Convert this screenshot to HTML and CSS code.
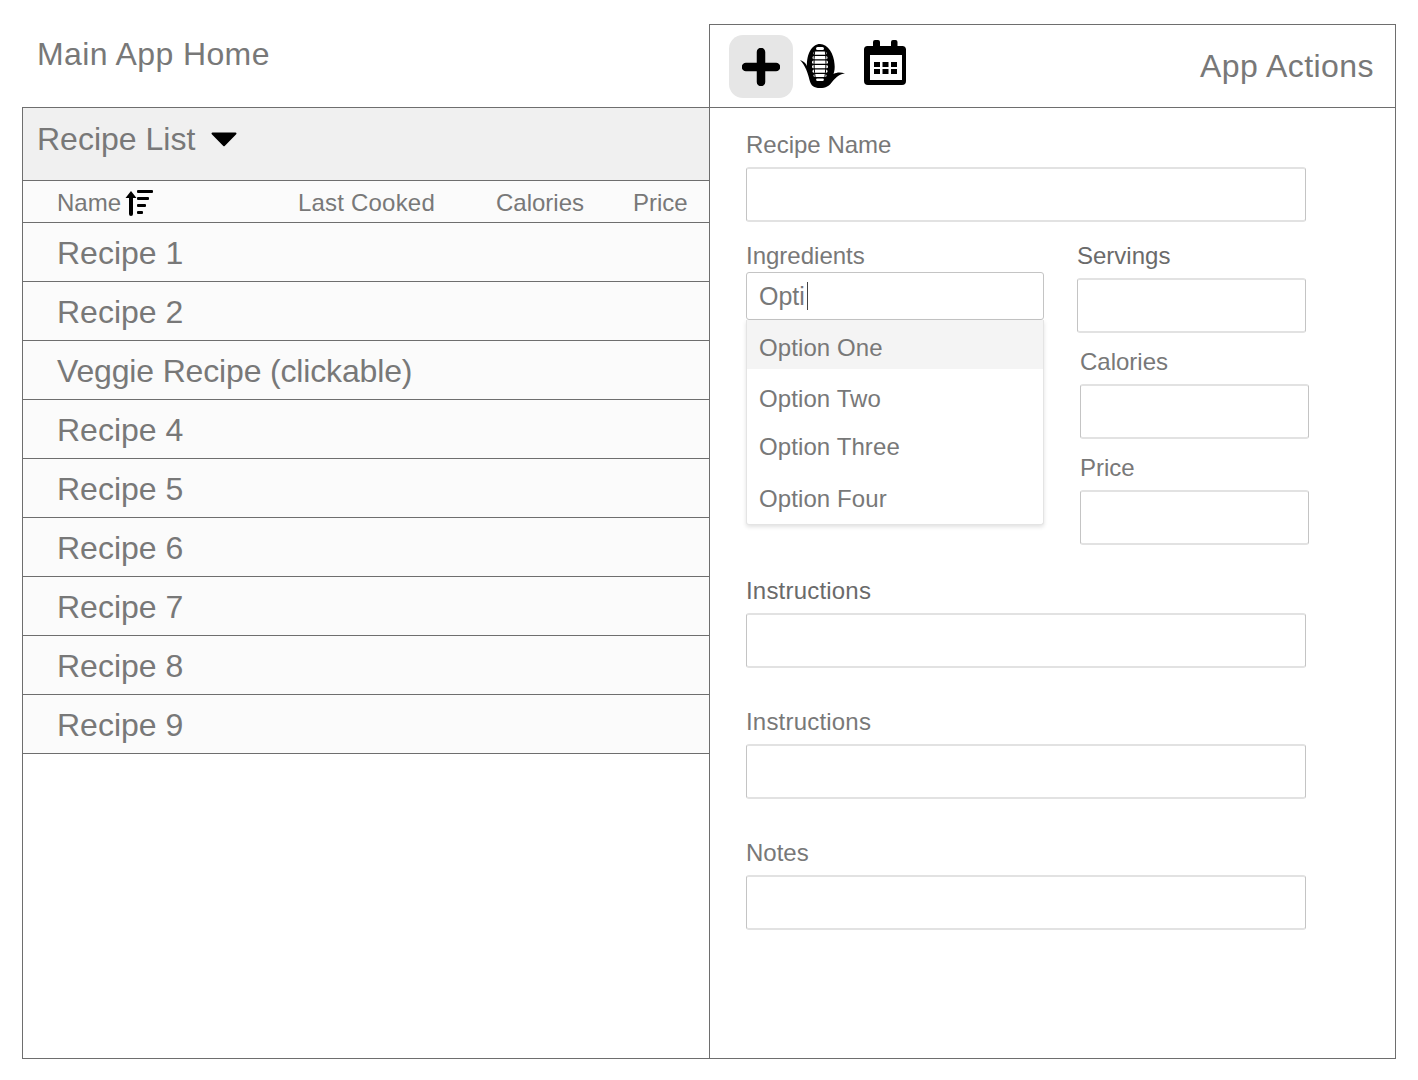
FILE: index.html
```html
<!DOCTYPE html>
<html lang="en">
<head>
    <meta charset="UTF-8">
    <meta name="viewport" content="width=device-width, initial-scale=1.0">
    <title>Recipes</title>
    <link rel="stylesheet" href="styles.css">
</head>
<body>
    <div id="main">
        <section class="home">
            <h1 class="home-title">Main App Home</h1>
            <div class="list-panel">
                <div class="list-head">
                    <h2>Recipe List</h2>
                    <svg class="caret" width="26" height="15" viewBox="0 0 26 15"><path d="M1.5 0.5h23a1 1 0 0 1 .7 1.7L13.7 14a1 1 0 0 1-1.4 0L.8 2.2A1 1 0 0 1 1.5 .5z"/></svg>
                </div>
                <div class="columns">
                    <div class="col col-name">Name
                        <svg class="sort" width="28" height="28" viewBox="0 0 28 28">
                            <path d="M6 2L11.500 9H8V25a2 2 0 0 1-4 0V9H.5z"/>
                            <rect x="12" y="1" width="16" height="3" rx="1"/>
                            <rect x="12" y="8" width="12" height="3" rx="1"/>
                            <rect x="12" y="15" width="9" height="3" rx="1"/>
                            <rect x="12" y="22" width="6" height="3" rx="1"/>
                        </svg>
                    </div>
                    <div class="col col-cooked">Last Cooked</div>
                    <div class="col col-cal">Calories</div>
                    <div class="col col-price">Price</div>
                </div>
                <ul class="recipes">
                    <li>Recipe 1</li>
                    <li>Recipe 2</li>
                    <li class="veggie">Veggie Recipe (clickable)</li>
                    <li>Recipe 4</li>
                    <li>Recipe 5</li>
                    <li>Recipe 6</li>
                    <li>Recipe 7</li>
                    <li>Recipe 8</li>
                    <li>Recipe 9</li>
                </ul>
            </div>
        </section>

        <section class="actions">
            <div class="toolbar">
                <button class="tool tool-add">
                    <svg width="38" height="38" viewBox="0 0 38 38"><path d="M19 4v30M4 19h30" stroke="#000" stroke-width="8.5" stroke-linecap="round" fill="none"/></svg>
                </button>
                <svg class="corn" width="46" height="46" viewBox="0 0 46 46">
                    <path d="M20 0C28 0 34 10 34.500 20C35 24 34.500 27 33.500 30C37 28 41 28 45 29.500C40 30 36 33 32 38C29 42 26 44 20 44C14 44 11 42 9.500 36C8 29 5 21 0 16C3 17 6 19 7 22C6.500 10 12 0 20 0z"/>
                    <g fill="#fff">
                        <rect x="16" y="3" width="8" height="3" rx="1.500"/>
                        <rect x="13.500" y="7.500" width="13" height="3.200" rx="1.500"/>
                        <rect x="12.500" y="12" width="15" height="3.200" rx="1.500"/>
                        <rect x="12" y="16.500" width="16" height="3.200" rx="1.500"/>
                        <rect x="12" y="21" width="16" height="3.200" rx="1.500"/>
                        <rect x="12.500" y="25.500" width="15" height="3.200" rx="1.500"/>
                        <rect x="13.500" y="30" width="13" height="3" rx="1.500"/>
                        <rect x="16" y="34.500" width="8" height="2.500" rx="1.200"/>
                    </g>
                    <g fill="none" stroke="#000" stroke-width="1">
                        <path d="M15.500 2C13.500 12 13.500 26 16 38"/>
                        <path d="M24.500 2C26.500 12 26.500 26 24 38"/>
                    </g>
                </svg>
                <svg class="calendar" width="44" height="46" viewBox="0 0 44 46">
                    <path d="M10 2a2 2 0 0 1 2-2h3a2 2 0 0 1 2 2V6h11V2a2 2 0 0 1 2-2h2.500a2 2 0 0 1 2 2V6h4.500A3.500 3.500 0 0 1 43 9.500V41a4 4 0 0 1-4 4H5a4 4 0 0 1-4-4V9.500A3.500 3.500 0 0 1 4.500 6H10z"/>
                    <rect x="7" y="15" width="32" height="25" fill="#fff"/>
                    <rect x="11" y="22" width="6" height="5"/><rect x="19.500" y="22" width="6" height="5"/><rect x="28" y="22" width="6" height="5"/>
                    <rect x="11" y="29" width="6" height="5"/><rect x="19.500" y="29" width="6" height="5"/><rect x="28" y="29" width="6" height="5"/>
                </svg>
                <h1 class="actions-title">App Actions</h1>
            </div>

            <form class="form">
                <div class="field wide name-field">
                    <label>Recipe Name</label>
                    <div class="input"></div>
                </div>

                <div class="split">
                    <div class="ingredients">
                        <label>Ingredients</label>
                        <div class="input input-search">Opti<span class="cursor"></span></div>
                        <ul class="dropdown">
                            <li class="on">Option One</li>
                            <li class="two">Option Two</li>
                            <li class="three">Option Three</li>
                            <li class="four">Option Four</li>
                        </ul>
                    </div>
                    <div class="side">
                        <div class="field servings">
                            <label class="strong">Servings</label>
                            <div class="input"></div>
                        </div>
                        <div class="field shifted">
                            <label>Calories</label>
                            <div class="input"></div>
                        </div>
                        <div class="field shifted">
                            <label>Price</label>
                            <div class="input"></div>
                        </div>
                    </div>
                </div>

                <div class="field wide first-long">
                    <label class="strong">Instructions</label>
                    <div class="input"></div>
                </div>
                <div class="field wide">
                    <label>Instructions</label>
                    <div class="input"></div>
                </div>
                <div class="field wide">
                    <label>Notes</label>
                    <div class="input"></div>
                </div>
            </form>
        </section>
    </div>
</body>
</html>
```

FILE: styles.css
```css
* {
    margin: 0;
    padding: 0;
    box-sizing: border-box;
}
html, body {
    width: 100%;
    height: 100%;
    overflow: hidden;
}
body {
    font-family: 'Liberation Sans', Arial, sans-serif;
    background-color: #fff;
    color: #787878;
}
ul {
    list-style: none;
}
h1, h2 {
    font-weight: normal;
}
#main {
    display: flex;
    height: 1059px;
    padding: 24px 0 0 22px;
}
.home {
    width: 688px;
    display: flex;
    flex-direction: column;
}
.home-title {
    height: 83px;
    padding: 12px 0 0 15px;
    font-size: 32px;
    line-height: 36px;
    letter-spacing: 0.4px;
}
.list-panel {
    flex: 1;
    border: 1px solid #6e6e6e;
    border-right: none;
}
.list-head {
    height: 73px;
    background-color: #f0f0f0;
    border-bottom: 1px solid #6e6e6e;
    padding: 13px 0 0 14px;
    display: flex;
    align-items: flex-start;
}
.list-head h2 {
    font-size: 32px;
    line-height: 36px;
}
.caret {
    margin: 11px 0 0 16px;
}
.columns {
    height: 42px;
    background-color: #fbfbfb;
    border-bottom: 1px solid #6e6e6e;
    display: flex;
    align-items: center;
    padding-top: 3px;
    font-size: 24px;
}
.col {
    white-space: nowrap;
}
.col-name {
    width: 275px;
    padding-left: 34px;
    display: flex;
    align-items: center;
    gap: 4px;
}
.sort {
    margin-top: -1px;
}
.col-cooked {
    width: 198px;
    letter-spacing: 0.2px;
}
.col-cal {
    width: 137px;
}
.recipes li {
    height: 59px;
    background-color: #fbfbfb;
    border-bottom: 1px solid #6e6e6e;
    padding-left: 34px;
    font-size: 32px;
    line-height: 60px;
}
.recipes .veggie {
    letter-spacing: -0.16px;
}
.actions {
    width: 687px;
    margin-left: -1px;
    border: 1px solid #6e6e6e;
}
.toolbar {
    height: 83px;
    border-bottom: 1px solid #6e6e6e;
    display: flex;
    align-items: flex-start;
    padding: 10px 21px 0 19px;
}
.tool {
    width: 64px;
    height: 63px;
    border: none;
    border-radius: 14px;
    background-color: #e6e6e6;
    display: flex;
    align-items: center;
    justify-content: center;
}
.corn {
    margin: 9px 0 0 7px;
}
.calendar {
    margin: 5px 0 0 17px;
}
.actions-title {
    margin-left: auto;
    font-size: 32px;
    line-height: 36px;
    padding-top: 13px;
    letter-spacing: 0.45px;
}
.form {
    padding: 26px 0 0 36px;
    font-size: 24px;
}
label {
    display: block;
    line-height: 22px;
    height: 22px;
}
.strong {
    color: #6a6a6a;
}
.input {
    height: 55px;
    border: 1px solid #c4c4c4;
    border-top: 2px solid #e2e2e2;
    border-bottom: 2px solid #e2e2e2;
    border-radius: 3px;
    background-color: #fff;
    margin: 11px 0 -1px;
}
.wide {
    width: 560px;
}
.split {
    display: flex;
    margin-top: 24px;
}
.ingredients {
    position: relative;
    width: 298px;
}
.input-search {
    height: 48px;
    margin: 5px 0 0;
    border: 1px solid #c4c4c4;
    padding-left: 12px;
    line-height: 47px;
    font-size: 25px;
    display: flex;
    align-items: center;
}
.cursor {
    width: 1px;
    height: 28px;
    background-color: #444;
    margin-left: 2px;
}
.dropdown {
    position: absolute;
    top: 75px;
    left: 0;
    width: 298px;
    height: 205px;
    background-color: #fff;
    border: 1px solid #e4e4e4;
    border-top: none;
    border-radius: 0 0 3px 3px;
    box-shadow: 0 2px 4px rgba(0, 0, 0, 0.12);
    font-size: 24px;
    letter-spacing: 0.1px;
    z-index: 5;
}
.dropdown li {
    padding-left: 12px;
    line-height: 30px;
}
.dropdown .on {
    height: 49px;
    padding-top: 13px;
    background-color: #f4f4f4;
}
.dropdown .two {
    margin-top: 15px;
}
.dropdown .three {
    margin-top: 18px;
}
.dropdown .four {
    margin-top: 22px;
}
.side {
    margin-left: 33px;
    width: 232px;
}
.servings {
    width: 229px;
}
.shifted {
    width: 229px;
    margin: 19px 0 0 3px;
}
.first-long {
    margin-top: 36px;
}
.first-long label,
.first-long + .field label {
    letter-spacing: 0.2px;
}
.first-long + .field,
.first-long + .field + .field {
    margin-top: 44px;
}
```
